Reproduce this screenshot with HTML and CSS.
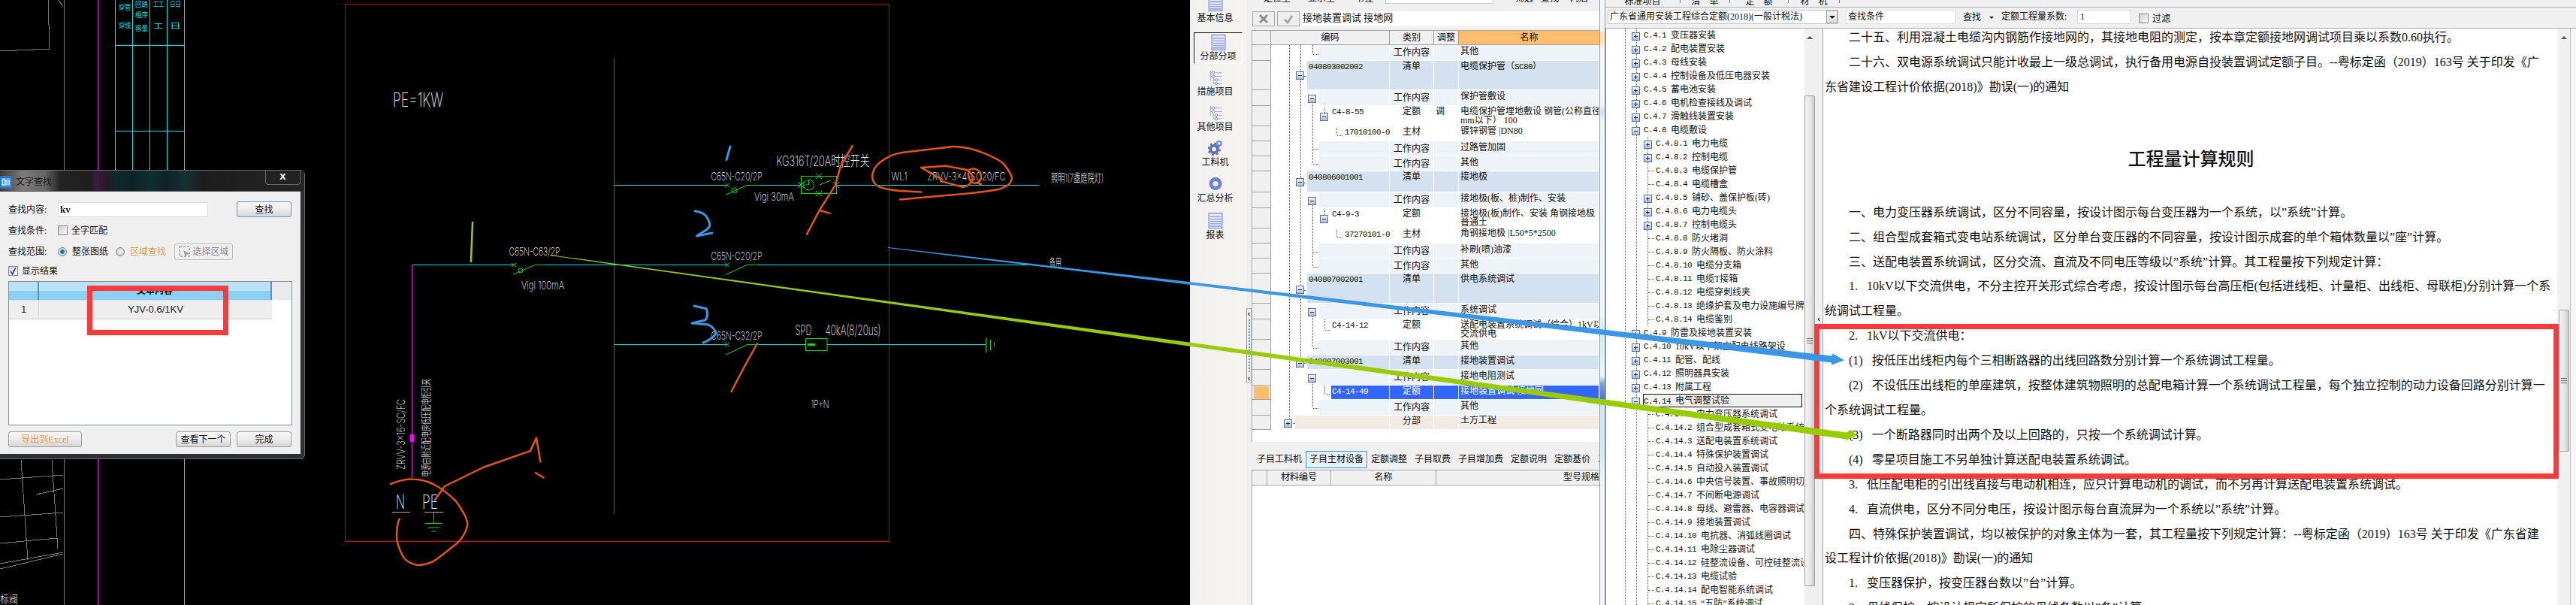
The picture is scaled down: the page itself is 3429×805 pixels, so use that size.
FILE: index.html
```html
<!DOCTYPE html>
<html lang="zh-CN">
<head>
<meta charset="utf-8">
<title>文字查找</title>
<link rel="stylesheet" href="styles.css">
</head>
<body>
<svg class="defs" aria-hidden="true">
  <defs>
    <linearGradient id="bxg" x1="0" y1="0" x2="0" y2="1"><stop offset="0" stop-color="#f4f7fd"/><stop offset="1" stop-color="#a9bbdd"/></linearGradient>
    <symbol id="minus" viewBox="0 0 11 11"><rect x=".5" y=".5" width="10" height="10" fill="url(#bxg)" stroke="#5d6f93"/><path d="M3 5.5h5" stroke="#1d2a55"/></symbol>
    <symbol id="plus" viewBox="0 0 11 11"><rect x=".5" y=".5" width="10" height="10" fill="url(#bxg)" stroke="#5d6f93"/><path d="M3 5.5h5M5.5 3v5" stroke="#1d2a55"/></symbol>
    <symbol id="listic" viewBox="0 0 18 20"><rect x=".5" y=".5" width="17" height="19" fill="#dfe6fa" stroke="#7280c8"/><path d="M2 5h14M2 8h14M2 11h14M2 14h14M2 17h14" stroke="#7f8fd0"/></symbol>
    <symbol id="treeic" viewBox="0 0 20 22"><path d="M3 2v14M3 5h16M3 10h16M7 10v10M7 15h12M7 20h12" fill="none" stroke="#9aa6c8"/><circle cx="7" cy="5" r="1.8" fill="#fff" stroke="#7d8cc0"/><circle cx="7" cy="10" r="1.8" fill="#fff" stroke="#7d8cc0"/><circle cx="11" cy="15" r="1.8" fill="#fff" stroke="#7d8cc0"/><circle cx="11" cy="20" r="1.8" fill="#fff" stroke="#7d8cc0"/></symbol>
  </defs>
</svg>

<div class="screen">
  <svg class="cad" width="1584" height="805" viewBox="0 0 1584 805">
    <g class="crisp" fill="none">
      <path class="gy" d="M85 0V226M85 611V805"/>
      <path class="gy" d="M0 68L66 65L64 0M77 0L84 8M28 612L37 745M69 612L77 730M0 638L84 632M48 658L84 650M0 688L84 682M0 723L76 716M0 757L84 737M0 750L84 735"/>
      <path class="mg" d="M130.500 0V805"/>
      <path class="cy" d="M153.500 0V226M176.500 0V226M199.500 0V226M222.500 0V226M245.500 0V805M153 60.500H246M153 174.500H246"/>
      <path class="rd" d="M459.500 5.500H1183.500V720.500H459.500Z"/>
      <path class="mg" d="M548.500 352V636M817.500 77V684"/>
      <path class="cy" d="M549 352.500H684M725 352.500H820M818 246.500H968M1009 246.500H1066M1113 246.500H1383M820 352.500H968M1009 352.500H1371M818 458.500H968M1009 458.500H1072M1101 458.500H1313"/>
    </g>
    <g class="gn" fill="none">
      <path d="M681 350l6 5M681 355l6-5M683 365L712 352.500H725"/><circle cx="693" cy="360" r="3"/>
      <path d="M965 243.500l6 6M965 249.500l6-6M966 259L994 246.500H1009"/><circle cx="977.500" cy="253.500" r="3.500"/>
      <path d="M965 349.500l6 6M965 355.500l6-6M966 365.500L994 352.500H1009"/>
      <path d="M965 455.500l6 6M965 461.500l6-6M966 472L995 458.500H1009"/>
      <rect x="1066.500" y="234.500" width="47" height="23"/><circle cx="1076.500" cy="246" r="7"/>
      <path d="M1076.500 240v6h-6M1062 242l8 8M1062 250l8-8M1086 231l8 7M1086 238l8-7M1086 254l8 7M1086 261l8-7M1109 242l8 8M1109 250l8-8M1091 246L1106 240"/>
      <rect x="1072.500" y="450.500" width="28.500" height="16"/>
      <path d="M1075 458.500h10" stroke-width="3"/>
      <path d="M1312.500 449.500V469M1318.500 452V466M1323.500 455V461"/>
      <path d="M577.500 681V696.500M566 696.500H588M570 702H585M574.500 707H580.500"/>
    </g>
    <path class="tan" d="M522 681.500H546M565 681.500H590"/>
    <rect x="546" y="578" width="5" height="10" fill="#f0f"/>

    <g class="cadt">
      <text x="523" y="142" font-size="25" textLength="67" lengthAdjust="spacingAndGlyphs">PE=1KW</text>
      <text x="677.500" y="340" font-size="15" textLength="68" lengthAdjust="spacingAndGlyphs">C65N-C63/2P</text>
      <text x="694" y="385" font-size="15" textLength="57" lengthAdjust="spacingAndGlyphs">Vigi 100mA</text>
      <text x="539" y="625" font-size="15" textLength="94" lengthAdjust="spacingAndGlyphs" transform="rotate(-90 539 625)">ZRVV-3x16-SC/FC</text>
      <text x="572" y="635" font-size="14" textLength="131" lengthAdjust="spacingAndGlyphs" transform="rotate(-90 572 635)">电源由附近配电房低压配电柜引来</text>
      <text x="527" y="677" font-size="25" textLength="12" lengthAdjust="spacingAndGlyphs">N</text>
      <text x="562" y="677" font-size="25" textLength="21" lengthAdjust="spacingAndGlyphs">PE</text>
      <text x="946.500" y="240" font-size="15" textLength="68" lengthAdjust="spacingAndGlyphs">C65N-C20/2P</text>
      <text x="1004" y="267" font-size="15" textLength="53" lengthAdjust="spacingAndGlyphs">Vigi 30mA</text>
      <text x="1033.500" y="221" font-size="19" textLength="124" lengthAdjust="spacingAndGlyphs">KG316T/20A时控开关</text>
      <text x="1186.500" y="240" font-size="15" textLength="21" lengthAdjust="spacingAndGlyphs">WL1</text>
      <text x="1234.500" y="240" font-size="15" textLength="104" lengthAdjust="spacingAndGlyphs">ZRVV-3x4-SC20/FC</text>
      <text x="1399" y="242" font-size="15" textLength="70" lengthAdjust="spacingAndGlyphs">照明1(7盏庭院灯)</text>
      <text x="1397" y="354" font-size="14" textLength="16" lengthAdjust="spacingAndGlyphs">备用</text>
      <text x="946.500" y="345.500" font-size="15" textLength="68" lengthAdjust="spacingAndGlyphs">C65N-C20/2P</text>
      <text x="946.500" y="451.500" font-size="15" textLength="68" lengthAdjust="spacingAndGlyphs">C65N-C32/2P</text>
      <text x="1058.500" y="445.500" font-size="19" textLength="22" lengthAdjust="spacingAndGlyphs">SPD</text>
      <text x="1098.500" y="445.500" font-size="19" textLength="74" lengthAdjust="spacingAndGlyphs">40kA(8/20us)</text>
      <text x="1079.500" y="543" font-size="15" textLength="24" lengthAdjust="spacingAndGlyphs">1P+N</text>
      <text x="0" y="802" font-size="14" textLength="24" lengthAdjust="spacingAndGlyphs">标阀</text>
    </g>
    <g class="cadc">
      <text x="158" y="13" font-size="9" textLength="16" lengthAdjust="spacingAndGlyphs">穿管</text>
      <text x="158" y="37" font-size="9" textLength="16" lengthAdjust="spacingAndGlyphs">穿线</text>
      <text x="180" y="9" font-size="9" textLength="17" lengthAdjust="spacingAndGlyphs">回路</text>
      <text x="180" y="23" font-size="9" textLength="17" lengthAdjust="spacingAndGlyphs">相序</text>
      <text x="180" y="41" font-size="9" textLength="17" lengthAdjust="spacingAndGlyphs">容量</text>
      <text x="204" y="9" font-size="9" textLength="14" lengthAdjust="spacingAndGlyphs">工工</text>
      <text x="204" y="38" font-size="9" textLength="13" lengthAdjust="spacingAndGlyphs">工</text>
      <text x="226" y="9" font-size="9" textLength="15" lengthAdjust="spacingAndGlyphs">日日</text>
      <text x="226" y="38" font-size="9" textLength="15" lengthAdjust="spacingAndGlyphs">日</text>
    </g>

    <g class="ink-or" fill="none">
      <path d="M1134.700 194L1119 220.700L1112 246.400L1090.800 279.800L1074 311.600M1090.800 279.800L1104.600 283.900"/>
      <path d="M1226 255.600L1198 254C1180 252 1167 250 1163 242C1158 232 1164 222 1172 215.600C1184 207 1192 204 1203 202.800L1269 195C1285 195 1298 199 1310 203.800C1325 210 1332 214 1336 218C1342 226 1347 232 1347 237.700C1345 246 1338 249 1331 251.500C1310 256 1285 258 1259 260L1198 265.400"/>
      <path d="M1254 238.700L1226 223L1259 220.700L1287 226C1293 230 1295 234 1295 238.700C1292 245 1288 248 1282 249L1269 245.400L1252 241"/>
      <path d="M1290 226C1298 222 1306 227 1306 235C1306 242 1300 245 1295 243C1289 240 1288 232 1290 226M1299 243L1306 245"/>
      <path d="M1008 457L991 487.700L973.500 521"/>
      <path d="M520 644C530 640 540 637 548.500 637.600C560 638 568 640 576.500 644C590 651 600 660 607 667C615 678 622 690 622.400 698C620 710 614 718 607 724C595 733 586 741 576.500 747C568 751 562 752 556 752C545 750 539 746 535.700 739C531 730 528 722 528 713.600C528 705 529 696 531.600 690.500"/>
      <path d="M579 665L592 647L643 622L704 600.600M705.600 600.600L714 582.600L719.400 614.500M712.800 629L723.500 635.500"/>
    </g>
    <g class="ink-bl" fill="none">
      <path d="M972 195L967 212.500"/>
      <path d="M925 280.800C934 282 940 286 942 291C946 298 946 302 940 306C934 310 930 312 927.600 314L948 310"/>
      <path d="M924 407L940.300 410.700C942 416 942 422 938.800 426L921 430L943 432C950 436 953 440 953 444C948 450 942 454 936 456"/>
    </g>
    <path class="ink-gr" fill="none" d="M629 296L627 348"/>
  </svg>

  <aside class="side">
    <div class="si"><svg class="ic"><use href="#listic"/></svg><span>基本信息</span></div>
    <div class="si on"><svg class="ic"><use href="#listic"/></svg><span>分部分项</span></div>
    <div class="si"><svg class="ic"><use href="#treeic"/></svg><span>措施项目</span></div>
    <div class="si"><svg class="ic"><use href="#treeic"/></svg><span>其他项目</span></div>
    <div class="si"><svg class="ic" viewBox="0 0 20 22"><circle cx="8" cy="13" r="5" fill="none" stroke="#5a6fc0" stroke-width="4"/><circle cx="8" cy="13" r="8" fill="none" stroke="#5a6fc0" stroke-width="2.500" stroke-dasharray="3 3.300"/><circle cx="15" cy="5" r="3" fill="none" stroke="#7f90d8" stroke-width="2.500"/></svg><span>工料机</span></div>
    <div class="si"><svg class="ic" viewBox="0 0 20 20"><circle cx="10" cy="10" r="6" fill="#eee" stroke="#6a7fe0" stroke-width="5"/></svg><span>汇总分析</span></div>
    <div class="si"><svg class="ic"><use href="#listic"/></svg><span>报表</span></div>
  </aside>

  <div class="split"><div class="grip"><b>‹</b><i></i><b>‹</b></div></div>

  <main class="mid">
    <div class="topclip">
      <div class="topbar">
        <span class="tb1">定位至</span><span class="tb2">显示至</span><span class="tb3">书签</span>
        <span class="tbi"></span><span class="tb4">筛选</span><span class="tb5">查找</span><span class="tb6">闪后</span>
      </div>
    </div>
    <div class="editbar">
      <span class="ebtn"><svg width="14" height="14" viewBox="0 0 14 14"><path d="M2 2l10 10M12 2L2 12" stroke="#8c8c8c" stroke-width="3"/></svg></span>
      <span class="ebtn"><svg width="14" height="14" viewBox="0 0 14 14"><path d="M2 8l4 4 6-9" fill="none" stroke="#a8a8a8" stroke-width="3"/></svg></span>
      <span class="einput">接地装置调试 接地网</span>
    </div>

    <section class="grid">
      <div class="gh">
        <i class="rn"></i><div class="code">编码</div><div class="type">类别</div><div class="adj">调整</div><div class="name">名称</div>
      </div>
      <div class="gbody">
        <div class="r wk h21"><i class="rn"></i><div class="code"><div class="fill"></div></div><div class="type">工作内容</div><div class="adj"></div><div class="name">其他</div></div>
        <div class="r list h39"><i class="rn"></i><div class="code"><div class="fill"><span class="mono">040803002002</span></div></div><div class="type">清单</div><div class="adj"></div><div class="name">电缆保护管（<span class="mono">SC80</span>）</div></div>
        <div class="r wk h21"><i class="rn"></i><div class="code"><div class="fill"></div></div><div class="type">工作内容</div><div class="adj"></div><div class="name">保护管敷设</div></div>
        <div class="r quota h27"><i class="rn"></i><div class="code"><div class="fill"><span class="mono">C4-8-55</span></div></div><div class="type">定额</div><div class="adj">调</div><div class="name">电缆保护管埋地敷设 钢管(公称直径100<br>mm以下） 100</div></div>
        <div class="r mat h20"><i class="rn"></i><div class="code"><div class="fill"><span class="mono">17010100-0</span></div></div><div class="type">主材</div><div class="adj"></div><div class="name">镀锌钢管 |DN80</div></div>
        <div class="r wk h20"><i class="rn"></i><div class="code"><div class="fill"></div></div><div class="type">工作内容</div><div class="adj"></div><div class="name">过路管加固</div></div>
        <div class="r wk h20"><i class="rn"></i><div class="code"><div class="fill"></div></div><div class="type">工作内容</div><div class="adj"></div><div class="name">其他</div></div>
        <div class="r list h28"><i class="rn"></i><div class="code"><div class="fill"><span class="mono">040806001001</span></div></div><div class="type">清单</div><div class="adj"></div><div class="name">接地极</div></div>
        <div class="r wk h21"><i class="rn"></i><div class="code"><div class="fill"></div></div><div class="type">工作内容</div><div class="adj"></div><div class="name">接地极(板、桩)制作、安装</div></div>
        <div class="r quota h27"><i class="rn"></i><div class="code"><div class="fill"><span class="mono">C4-9-3</span></div></div><div class="type">定额</div><div class="adj"></div><div class="name">接地极(板)制作、安装 角钢接地极<br>普通土</div></div>
        <div class="r mat h20"><i class="rn"></i><div class="code"><div class="fill"><span class="mono">37270101-0</span></div></div><div class="type">主材</div><div class="adj"></div><div class="name">角钢接地极 |L50*5*2500</div></div>
        <div class="r wk h20"><i class="rn"></i><div class="code"><div class="fill"></div></div><div class="type">工作内容</div><div class="adj"></div><div class="name">补刷(喷)油漆</div></div>
        <div class="r wk h20"><i class="rn"></i><div class="code"><div class="fill"></div></div><div class="type">工作内容</div><div class="adj"></div><div class="name">其他</div></div>
        <div class="r list h40"><i class="rn"></i><div class="code"><div class="fill"><span class="mono">040807002001</span></div></div><div class="type">清单</div><div class="adj"></div><div class="name">供电系统调试</div></div>
        <div class="r wk h21"><i class="rn"></i><div class="code"><div class="fill"></div></div><div class="type">工作内容</div><div class="adj"></div><div class="name">系统调试</div></div>
        <div class="r quota h27"><i class="rn"></i><div class="code"><div class="fill"><span class="mono">C4-14-12</span></div></div><div class="type">定额</div><div class="adj"></div><div class="name">送配电装置系统调试（综合）1kV以下<br>交流供电</div></div>
        <div class="r wk h21"><i class="rn"></i><div class="code"><div class="fill"></div></div><div class="type">工作内容</div><div class="adj"></div><div class="name">其他</div></div>
        <div class="r list h19"><i class="rn"></i><div class="code"><div class="fill"><span class="mono">040807003001</span></div></div><div class="type">清单</div><div class="adj"></div><div class="name">接地装置调试</div></div>
        <div class="r wk h21"><i class="rn"></i><div class="code"><div class="fill"></div></div><div class="type">工作内容</div><div class="adj"></div><div class="name">接地电阻测试</div></div>
        <div class="r quota sel h19"><i class="rn"></i><div class="code"><div class="fill"><span class="mono">C4-14-49</span></div></div><div class="type">定额</div><div class="adj"></div><div class="name">接地装置调试 接地网</div></div>
        <div class="r wk h21"><i class="rn"></i><div class="code"><div class="fill"></div></div><div class="type">工作内容</div><div class="adj"></div><div class="name">其他</div></div>
        <div class="r fen h19"><i class="rn"></i><div class="code"><div class="fill"></div></div><div class="type">分部</div><div class="adj"></div><div class="name">土方工程</div></div>

        <svg class="twigs" width="158" height="512" viewBox="0 0 158 512">
          <path class="dots" d="M24.500 0V503M39.500 0V423M55.500 0V12H63M55.500 72V158H63M55.500 138H63M55.500 207V295H63M55.500 275H63M55.500 355V403H63M55.500 443V483H63M71.500 83V95M87.500 110V120H95M71.500 219V231M87.500 246V256H95M71.500 365V379H79M71.500 453V464H79M39.500 41H48M39.500 183H48M39.500 326H48M39.500 423H48M24.500 503H32"/>
          <use href="#minus" x="33" y="35" width="11" height="11"/>
          <use href="#minus" x="33" y="177" width="11" height="11"/>
          <use href="#minus" x="33" y="320" width="11" height="11"/>
          <use href="#minus" x="33" y="418" width="11" height="11"/>
          <use href="#minus" x="49" y="66" width="11" height="11"/>
          <use href="#minus" x="49" y="202" width="11" height="11"/>
          <use href="#minus" x="49" y="350" width="11" height="11"/>
          <use href="#minus" x="49" y="438" width="11" height="11"/>
          <use href="#minus" x="65" y="90" width="11" height="11"/>
          <use href="#minus" x="65" y="226" width="11" height="11"/>
          <use href="#plus" x="17" y="498" width="11" height="11"/>
        </svg>
      </div>
      <div class="gblank"></div>
    </section>

    <div class="ltabs">
      <span>子目工料机</span><span class="act">子目主材设备</span><span>定额调整</span><span>子目取费</span><span>子目增加费</span><span>定额说明</span><span>定额基价</span><span>工</span>
    </div>
    <section class="ltable">
      <div class="lh"><i class="c0"></i><div class="c1">材料编号</div><div class="c2">名称</div><div class="c3">型号规格</div></div>
    </section>
  </main>

  <div class="midbar"></div>

  <div class="right">
    <div class="rtabs">
      <span class="rt t1">标准项目</span><span class="rt t2">清　单</span><span class="rt t3">定　额</span><span class="rt t4">材　机</span>
    </div>
    <div class="rtool">
      <div class="combo"><span class="ctext">广东省通用安装工程综合定额(2018)(一般计税法)</span><span class="carr"><b></b></span></div>
      <div class="sinput">查找条件</div>
      <span class="sbtn">查找</span><span class="sdrop"></span>
      <span class="slab">定额工程量系数:</span>
      <div class="ninput">1</div>
      <span class="chk"></span><span class="flt">过滤</span>
    </div>
    <div class="panes">
      <nav class="tree">
        <div class="t l1"><svg class="bx"><use href="#plus"/></svg><em>C.4.1 </em>变压器安装</div>
        <div class="t l1"><svg class="bx"><use href="#plus"/></svg><em>C.4.2 </em>配电装置安装</div>
        <div class="t l1"><svg class="bx"><use href="#plus"/></svg><em>C.4.3 </em>母线安装</div>
        <div class="t l1"><svg class="bx"><use href="#plus"/></svg><em>C.4.4 </em>控制设备及低压电器安装</div>
        <div class="t l1"><svg class="bx"><use href="#plus"/></svg><em>C.4.5 </em>蓄电池安装</div>
        <div class="t l1"><svg class="bx"><use href="#plus"/></svg><em>C.4.6 </em>电机检查接线及调试</div>
        <div class="t l1"><svg class="bx"><use href="#plus"/></svg><em>C.4.7 </em>滑触线装置安装</div>
        <div class="t l1"><svg class="bx"><use href="#minus"/></svg><em>C.4.8 </em>电缆敷设</div>
        <div class="t l2"><svg class="bx"><use href="#plus"/></svg><em>C.4.8.1 </em>电力电缆</div>
        <div class="t l2"><svg class="bx"><use href="#plus"/></svg><em>C.4.8.2 </em>控制电缆</div>
        <div class="t l2"><u></u><em>C.4.8.3 </em>电缆保护管</div>
        <div class="t l2"><u></u><em>C.4.8.4 </em>电缆槽盒</div>
        <div class="t l2"><svg class="bx"><use href="#plus"/></svg><em>C.4.8.5 </em>铺砂、盖保护板(砖)</div>
        <div class="t l2"><svg class="bx"><use href="#plus"/></svg><em>C.4.8.6 </em>电力电缆头</div>
        <div class="t l2"><svg class="bx"><use href="#plus"/></svg><em>C.4.8.7 </em>控制电缆头</div>
        <div class="t l2"><u></u><em>C.4.8.8 </em>防火堵洞</div>
        <div class="t l2"><u></u><em>C.4.8.9 </em>防火隔板、防火涂料</div>
        <div class="t l2"><u></u><em>C.4.8.10 </em>电缆分支箱</div>
        <div class="t l2"><u></u><em>C.4.8.11 </em>电缆T接箱</div>
        <div class="t l2"><u></u><em>C.4.8.12 </em>电缆穿刺线夹</div>
        <div class="t l2"><u></u><em>C.4.8.13 </em>绝缘护套及电力设施编号牌</div>
        <div class="t l2"><u></u><em>C.4.8.14 </em>电缆鉴别</div>
        <div class="t l1"><svg class="bx"><use href="#plus"/></svg><em>C.4.9 </em>防雷及接地装置安装</div>
        <div class="t l1"><svg class="bx"><use href="#plus"/></svg><em>C.4.10 </em>10kV以下架空配电线路架设</div>
        <div class="t l1"><svg class="bx"><use href="#plus"/></svg><em>C.4.11 </em>配管、配线</div>
        <div class="t l1"><svg class="bx"><use href="#plus"/></svg><em>C.4.12 </em>照明器具安装</div>
        <div class="t l1"><svg class="bx"><use href="#plus"/></svg><em>C.4.13 </em>附属工程</div>
        <div class="t l1 cur"><svg class="bx"><use href="#minus"/></svg><span class="curbox"><em>C.4.14 </em>电气调整试验</span></div>
        <div class="t l2"><u></u><em>C.4.14.1 </em>电力变压器系统调试</div>
        <div class="t l2"><u></u><em>C.4.14.2 </em>组合型成套箱式变电站系统调试</div>
        <div class="t l2"><u></u><em>C.4.14.3 </em>送配电装置系统调试</div>
        <div class="t l2"><u></u><em>C.4.14.4 </em>特殊保护装置调试</div>
        <div class="t l2"><u></u><em>C.4.14.5 </em>自动投入装置调试</div>
        <div class="t l2"><u></u><em>C.4.14.6 </em>中央信号装置、事故照明切换</div>
        <div class="t l2"><u></u><em>C.4.14.7 </em>不间断电源调试</div>
        <div class="t l2"><u></u><em>C.4.14.8 </em>母线、避雷器、电容器调试</div>
        <div class="t l2"><u></u><em>C.4.14.9 </em>接地装置调试</div>
        <div class="t l2"><u></u><em>C.4.14.10 </em>电抗器、消弧线圈调试</div>
        <div class="t l2"><u></u><em>C.4.14.11 </em>电除尘器调试</div>
        <div class="t l2"><u></u><em>C.4.14.12 </em>硅整流设备、可控硅整流设备</div>
        <div class="t l2"><u></u><em>C.4.14.13 </em>电缆试验</div>
        <div class="t l2"><u></u><em>C.4.14.14 </em>配电智能系统调试</div>
        <div class="t l2"><u></u><em>C.4.14.15 </em>“五防”系统调试</div>
      </nav>
      <div class="vs vs-tree"><span class="up"></span><div class="thumb"><i></i></div></div>
      <div class="psplit"><b>‹</b></div>
      <article class="doc">
        <p>二十五、利用混凝土电缆沟内钢筋作接地网的，其接地电阻的测定，按本章定额接地网调试项目乘以系数0.60执行。</p>
        <p>二十六、双电源系统调试只能计收最上一级总调试，执行备用电源自投装置调试定额子目。--粤标定函（2019）163号 关于印发《广<br>东省建设工程计价依据(2018)》勘误(一)的通知</p>
        <h1>工程量计算规则</h1>
        <p>一、电力变压器系统调试，区分不同容量，按设计图示每台变压器为一个系统，以”系统”计算。</p>
        <p>二、组合型成套箱式变电站系统调试，区分单台变压器的不同容量，按设计图示成套的单个箱体数量以”座”计算。</p>
        <p>三、送配电装置系统调试，区分交流、直流及不同电压等级以”系统”计算。其工程量按下列规定计算：</p>
        <p>1.&nbsp;&nbsp;&nbsp;10kV以下交流供电，不分主控开关形式综合考虑，按设计图示每台高压柜(包括进线柜、计量柜、出线柜、母联柜)分别计算一个系<br>统调试工程量。</p>
        <p>2.&nbsp;&nbsp;&nbsp;1kV以下交流供电：</p>
        <p>(1)&nbsp;&nbsp;&nbsp;按低压出线柜内每个三相断路器的出线回路数分别计算一个系统调试工程量。</p>
        <p>(2)&nbsp;&nbsp;&nbsp;不设低压出线柜的单座建筑，按整体建筑物照明的总配电箱计算一个系统调试工程量，每个独立控制的动力设备回路分别计算一<br>个系统调试工程量。</p>
        <p>(3)&nbsp;&nbsp;&nbsp;一个断路器同时出两个及以上回路的，只按一个系统调试计算。</p>
        <p>(4)&nbsp;&nbsp;&nbsp;零星项目施工不另单独计算送配电装置系统调试。</p>
        <p>3.&nbsp;&nbsp;&nbsp;低压配电柜的引出线直接与电动机相连，应只计算电动机的调试，而不另再计算送配电装置系统调试。</p>
        <p>4.&nbsp;&nbsp;&nbsp;直流供电，区分不同分电压，按设计图示每台直流屏为一个系统以”系统”计算。</p>
        <p>四、特殊保护装置调试，均以被保护的对象主体为一套，其工程量按下列规定计算：--粤标定函（2019）163号 关于印发《广东省建<br>设工程计价依据(2018)》勘误(一)的通知</p>
        <p>1.&nbsp;&nbsp;&nbsp;变压器保护，按变压器台数以”台”计算。</p>
        <p>2.&nbsp;&nbsp;&nbsp;母线保护，按设计规定所保护的母线条数以”条”计算。</p>
      </article>
      <div class="vs vs-doc"><span class="up"></span><div class="thumb"><i></i></div></div>
      <div class="edge"></div>
    </div>
  </div>

  <div class="bigred"></div>

  <div class="dialog">
    <header class="dtitle">
      <svg class="dicon" width="16" height="17" viewBox="0 0 16 17"><rect width="16" height="17" rx="2" fill="#2a78c8"/><rect x="2" y="3" width="12" height="11" fill="#8ec2f0" opacity=".55"/><path d="M3 5h4v7H3zM9 5v7M12 5v7" fill="none" stroke="#fff"/></svg>
      <span class="dname">文字查找</span>
      <span class="dclose">x</span>
    </header>
    <div class="dbody">
      <div class="drow first">
        <label>查找内容:</label><span class="dinput">kv</span><span class="dbtn prim w73">查找</span>
      </div>
      <div class="drow">
        <label>查找条件:</label><span class="cb"></span><span class="opt">全字匹配</span>
      </div>
      <div class="drow">
        <label>查找范围:</label><span class="rb sel"></span><span class="opt o2">整张图纸</span><span class="rb second"></span><span class="opt warn">区域查找</span>
        <span class="dbtn pick"><svg width="16" height="16" viewBox="0 0 16 16"><rect x="1" y="1" width="13" height="13" fill="none" stroke="#b5b5b5" stroke-width="2" stroke-dasharray="3 2"/><path d="M6 6l8 5-4 1-1 3z" fill="#9a9a9a"/></svg><span>选择区域</span></span>
      </div>
      <div class="drow last">
        <span class="cb on"><svg width="12" height="12" viewBox="0 0 12 12"><path d="M2.500 6l2.500 4 4.500-9" fill="none" stroke="#3b4f9c" stroke-width="2"/></svg></span><span class="opt o3">显示结果</span>
      </div>
      <div class="dtable">
        <div class="dh"><i class="d0"></i><b class="d1">文本内容</b><i class="d2"></i></div>
        <div class="dr"><span class="d0">1</span><span class="d1">YJV-0.6/1KV</span></div>
      </div>
      <div class="dfoot">
        <span class="dbtn warn w98">导出到Excel</span>
        <span class="dbtn w73 push">查看下一个</span>
        <span class="dbtn w73">完成</span>
      </div>
    </div>
    <div class="smallred"></div>
  </div>

  <svg class="arrows" width="3429" height="805" viewBox="0 0 3429 805">
    <polygon fill="#3a97e5" points="1182,329 2438,473.500 2440,470.500 2455,479.300 2438,485.700 2438,482.500 1182,330"/>
    <polygon fill="#99cc00" points="732,339 2458,575.500 2463,572 2472,579 2455,587 2458,584.500 732,340"/>
  </svg>
</div>
</body>
</html>
```

FILE: styles.css
```css
* { box-sizing: border-box; }
html, body { margin: 0; padding: 0; }
body {
  width: 3429px;
  height: 805px;
  overflow: hidden;
  background: #000;
  color: #111;
  font: 12px/14px "Liberation Serif", "Noto Sans CJK SC", serif;
}
.defs { position: absolute; width: 0; height: 0; }
.screen { position: relative; display: flex; width: 3429px; height: 805px; overflow: hidden; }

/* CAD canvas */
.cad { flex: none; display: block; background: #000; }
.crisp { shape-rendering: crispEdges; }
.gy { stroke: #7c7c7c; stroke-width: 1; fill: none; }
.mg { stroke: #e000e0; stroke-width: 1; }
.cy { stroke: #00e6e6; stroke-width: 1; }
.rd { stroke: #e00000; stroke-width: 1; }
.gn { stroke: #00e000; stroke-width: 1; }
.tan { stroke: #c8a060; stroke-width: 1; fill: none; }
.cadt { fill: #f2f2f2; font-family: Inter, "Noto Sans CJK SC", sans-serif; font-weight: 200; }
.cadc { fill: #00e6e6; font-family: "Noto Sans CJK SC", sans-serif; }
.ink-or { stroke: #e4560f; stroke-width: 2.5; stroke-linecap: round; stroke-linejoin: round; }
.ink-bl { stroke: #3a97e5; stroke-width: 3; stroke-linecap: round; stroke-linejoin: round; }
.ink-gr { stroke: #a2c41c; stroke-width: 2.5; stroke-linecap: round; }

/* left navigation */
.side {
  flex: none; width: 75px; height: 805px; overflow: hidden;
  background: linear-gradient(90deg, #f1f1f0, #f6f4ef);
  display: flex; flex-direction: column;
}
.si {
  height: 47px; flex: none; overflow: hidden; padding-right: 8px;
  display: flex; flex-direction: column; align-items: center; justify-content: flex-end; gap: 2px;
}
.si span { line-height: 14px; }
.ic { width: 20px; height: 21px; flex: none; }
.si:nth-child(1) { height: 31px; }
.si:nth-child(2) {
  height: 42px; width: 65px; margin: 12px 0 0 5px; padding: 0 0 2px;
  border: 1px solid #fff; border-color: #222 #fff #fff #222; gap: 0;
}
.si:nth-child(2) .ic { margin-bottom: 1px; }
.si:nth-child(3) { height: 44px; }
.si:nth-child(6) { height: 48px; }
.si:nth-child(7) { height: 49px; }

.split { flex: none; width: 7px; height: 805px; background: #f0f0f0; position: relative; }
.grip {
  margin-top: 410px; height: 100px; background: #efeff0; border: 1px solid #bbb; border-left-color: #999;
  display: flex; flex-direction: column; align-items: center; justify-content: space-between;
}
.grip b { line-height: 12px; font: 700 11px/12px "Liberation Sans", sans-serif; color: #222; }
.grip i { flex: 1; width: 1px; border-left: 2px dotted #6d97d8; margin: 2px 0; }

/* middle estimate grid */
.mid { flex: none; width: 464px; height: 805px; background: #f0f0f0; display: flex; flex-direction: column; border-right: 1px solid #9c9c9c; overflow: hidden; }
.topclip { height: 15px; overflow: hidden; flex: none; }
.topbar { position: relative; display: flex; height: 14px; margin-top: -9px; }
.tb1 { margin-left: 16px; width: 59px; }
.tb2 { width: 63px; }
.tb3 { width: 40px; }
.tbi { width: 144px; height: 14px; background: #fff; border: 1px solid #ccc; margin-right: 29px; }
.tb4 { width: 34px; }
.tb5 { width: 39px; }
.editbar { flex: none; height: 20px; margin-left: 1px; display: flex; align-items: stretch; }
.ebtn { width: 30px; border: 1px solid #a9a9a9; background: #eee; margin-right: 3px; display: flex; align-items: center; justify-content: center; }
.einput { flex: 1; background: #fff; margin-left: -1px; font-size: 13px; line-height: 18px; padding-left: 2px; }

.grid { flex: none; margin-top: 5px; background: #fff; border-left: 1px solid #a5a5a5; border-top: 1px solid #a5a5a5; }
.gh { display: flex; height: 19px; background: #f0f0f0; border-bottom: 1px solid #a5a5a5; text-align: center; line-height: 18px; }
.rn { display: block; flex: none; width: 25px; background: #f0f0f0; border-right: 1px solid #a5a5a5; border-bottom: 1px solid #a5a5a5; }
.gh .rn { border-bottom: 0; }
.code { flex: none; width: 158px; position: relative; }
.type { flex: none; width: 59px; text-align: center; }
.adj { flex: none; width: 33px; padding-left: 2px; }
.name { flex: 1; min-width: 0; white-space: nowrap; overflow: hidden; padding-left: 2px; line-height: 12px; }
.gh .code, .gh .type, .gh .adj { border-right: 1px solid #9a9a9a; }
.gh .adj { padding: 0; text-align: center; }
.gh .name { background: #ffbe6b; padding: 0; text-align: center; line-height: 18px; }

.gbody { position: relative; }
.r { display: flex; overflow: hidden; background: #fff; }
.h19 { height: 19px; } .h20 { height: 20px; } .h21 { height: 21px; } .h27 { height: 27px; }
.h28 { height: 28px; } .h39 { height: 39px; } .h40 { height: 40px; }
.r .code, .r .type, .r .adj, .r .name { border-right: 1px solid #fff; border-bottom: 1px solid #fff; }
.r .code { display: flex; }
.fill { flex: 1; min-width: 0; white-space: nowrap; line-height: 14px; }
.mono { font: 11px/14px "Liberation Mono", monospace; letter-spacing: -.6px; }
.wk .fill { margin-left: 63px; }
.list .fill { margin-left: 48px; padding-left: 2px; }
.quota .fill { margin-left: 80px; padding-left: 1px; }
.mat .fill { margin-left: 98px; }
.fen .fill { margin-left: 32px; }
.wk .fill, .wk .type, .wk .adj, .wk .name { background: #eef3f7; }
.list .fill, .list .type, .list .adj, .list .name { background: #d3e1f1; }
.fen .fill, .fen .type, .fen .adj, .fen .name { background: #f2ebe4; }
.sel .fill, .sel .type, .sel .adj, .sel .name { background: #3366ff; color: #fff; }
.sel .rn { background: linear-gradient(#ffbe6b, #ffbe6b) content-box, #f0f0f0; padding: 1px 2px 0; }
.r .type { padding-top: 1px; line-height: 13px; }
.wk .type { padding-top: 4px; }
.wk .name { padding-top: 2px; }
.list .type, .list .name, .quota .type, .quota .name { padding-top: 1px; }
.twigs { position: absolute; left: 25px; top: 0; }
.dots { fill: none; stroke: #555; stroke-width: 1; stroke-dasharray: 1 1; shape-rendering: crispEdges; }
.gblank { height: 16px; background: #fff; }

.ltabs { flex: none; margin: 12px 0 0 2px; height: 23px; display: flex; align-items: center; overflow: hidden; }
.ltabs span { padding: 0 5px; line-height: 21px; height: 23px; flex: none; border: 1px solid transparent; border-width: 1px 0; }
.ltabs .act { background: #e5f1fb; border: 1px solid #3399ff; padding: 0 4px; }
.ltable { flex: 1; margin-top: 2px; background: #fff; border-left: 1px solid #a5a5a5; border-top: 1px solid #a5a5a5; }
.lh { display: flex; height: 20px; background: #f0f0f0; border-bottom: 1px solid #a5a5a5; line-height: 19px; overflow: hidden; }
.c0 { width: 20px; border-right: 1px solid #a5a5a5; flex: none; }
.c1 { width: 85px; flex: none; text-align: center; border-right: 1px solid #a5a5a5; }
.c2 { width: 140px; flex: none; text-align: center; border-right: 1px solid #a5a5a5; }
.c3 { flex: 1; text-align: right; white-space: nowrap; }

.midbar {
  flex: none; width: 7px; height: 805px;
  background: linear-gradient(180deg, #eef6f6 0, #eef6f6 40px, #fbe3c5 44px, #fbe3c5 58px, #f3f6f8 64px, #f3f6f8 140px, #d7e2f8 146px, #d7e2f8 152px, #ecf6f8 160px, #ecf6f8 420px, #c4f0f4 440px, #eaf8fa 500px, #7aa4ee 510px, #3f74ea 530px, #cfe6f6 540px, #c8eef4 600px, #f0f4f6 640px);
  border-right: 1px solid #999;
}

/* quota library */
.right { flex: 1; min-width: 0; height: 805px; background: #f0f0f0; display: flex; flex-direction: column; }
.rtabs { flex: none; height: 10px; display: flex; overflow: hidden; border-bottom: 1px solid #a4b2c0; }
.rt { line-height: 14px; height: 9px; margin-top: -5px; padding-top: 0; text-align: center; border-right: 1px solid #8a8a8a; flex: none; box-sizing: content-box; }
.t1 { width: 99px; }
.t2 { width: 65px; }
.t3 { width: 77px; }
.t4 { width: 67px; }
.rtool { flex: none; height: 27px; padding: 3px 0 0 3px; display: flex; align-items: flex-start; white-space: nowrap; }
.combo { width: 307px; height: 19px; background: #fff; border: 1px solid #c8c8c8; display: flex; line-height: 17px; font-size: 12px; padding-left: 2px; }
.ctext { flex: 1; overflow: hidden; }
.carr { width: 15px; background: linear-gradient(#f4f4f4, #dedede); border: 1px solid #a0a0a0; display: flex; align-items: center; justify-content: center; }
.carr b, .sdrop { display: block; border: 4px solid transparent; border-top-color: #111; border-bottom-width: 0; }
.sinput { margin-left: 10px; width: 146px; height: 19px; background: #fff; border: 1px solid #e2e2e2; line-height: 17px; padding-left: 2px; }
.sbtn { margin-left: 10px; line-height: 21px; height: 21px; }
.sdrop { margin: 9px 0 0 11px; border-width: 3px 3px 0; }
.slab { margin-left: 10px; line-height: 19px; width: 101px; }
.ninput { width: 71px; height: 19px; background: #fff; border: 1px solid #dcdcdc; line-height: 17px; padding-left: 3px; }
.chk { margin: 5px 0 0 11px; width: 13px; height: 13px; border: 1px solid #8f8f8f; background: linear-gradient(135deg, #cfcfcf, #f6f6f6); }
.flt { margin-left: 5px; line-height: 24px; }

.panes { flex: 1; min-height: 0; display: flex; border-top: 1px solid #a8a8a8; }
.tree {
  flex: none; width: 265px; height: 767px; overflow: hidden; background:
    repeating-linear-gradient(#666 0 1px, transparent 1px 2px) 25px 0/1px 100% no-repeat,
    repeating-linear-gradient(#666 0 1px, transparent 1px 2px) 40px 0/1px 100% no-repeat,
    #fff;
  border-left: 1px solid #8e8e8e;
}
.t { height: 18px; display: flex; align-items: center; white-space: nowrap; line-height: 18px; overflow: hidden; width: 263px; }
.t em { font: 11px/18px "Liberation Mono", monospace; letter-spacing: -.6px; white-space: pre; flex: none; }
.bx { width: 11px; height: 11px; flex: none; margin-top: 3px; }
.l1 { padding-left: 34px; }
.l1 .bx { margin-right: 5px; }
.l2 {
  padding-left: 50px;
  background: repeating-linear-gradient(#666 0 1px, transparent 1px 2px) 55px 0/1px 100% no-repeat;
}
.l2 .bx { margin-right: 5px; }
.l2 u { display: block; width: 8px; margin: 0 2px 0 6px; border-top: 1px dotted #555; flex: none; }
.cur .curbox { display: block; flex: none; width: 212px; height: 18px; margin-left: -1px; background: #f0f0f0; border: 1px solid #111; line-height: 16px; }
.cur .curbox em { line-height: 16px; }

.vs { flex: none; display: flex; flex-direction: column; align-items: center; background: #f0f0f0; }
.up { display: block; flex: none; margin-top: 10px; border: 4px solid transparent; border-bottom-color: #555; border-top-width: 0; }
.vs-tree { width: 14px; }
.vs-tree .thumb { margin-top: 75px; height: 653px; }
.vs-doc { width: 17px; }
.vs-doc .thumb { margin-top: 360px; height: 189px; }
.thumb { width: 14px; flex: none; background: linear-gradient(90deg, #f3f3f3, #e4e4e4 60%, #c9c9c9); border: 1px solid #a2a2a2; border-radius: 2px; display: flex; align-items: center; justify-content: center; }
.thumb i { display: block; width: 8px; height: 8px; background: repeating-linear-gradient(#666 0 1px, transparent 1px 3px); }
.psplit { flex: none; width: 10px; background: #f0f0f0; display: flex; flex-direction: column; align-items: center; padding-top: 380px; }
.psplit b { font: 700 11px/12px "Liberation Sans", sans-serif; }
.doc { flex: 1; min-width: 0; height: 767px; overflow: hidden; background: #fff; border-left: 1px solid #a8a8a8; padding: 0 0 0 2px; font-size: 16px; line-height: 32.9px; white-space: nowrap; }
.doc p { margin: 0; text-indent: 32px; }
.doc p:first-child { margin-top: -4px; }
.doc h1 { margin: 57px 0 37px; font-size: 24px; line-height: 40px; text-align: center; font-weight: 500; font-family: "Noto Sans CJK SC", sans-serif; }
.edge { flex: none; width: 8px; background: #f6f6f6; border-left: 1px solid #c4c4c4; }

.bigred { position: absolute; left: 2415px; top: 431px; width: 991px; height: 206px; border: 7px solid #ff3939; }

/* find dialog */
.dialog { position: absolute; left: 0; top: 226px; width: 406px; height: 385px; background: #2d2f30; border: 1px solid #6b6b6b; border-left: 0; border-radius: 0 6px 6px 0; padding: 0 5px 6px 0; display: flex; flex-direction: column; }
.dtitle {
  flex: none; height: 27px; display: flex; align-items: flex-start; margin-right: -5px; overflow: hidden;
  background: linear-gradient(90deg, #3a3a3a 0, #7c7c7c 30px, #666 60px, #242424 80px, #1e1e1e 120px, #3d1a3f 130px, #221c24 142px, #10282c 155px, #0c2226 176px, #102e32 199px, #0f2226 222px, #143236 245px, #1d1d1d 270px, #242424 406px);
}
.dicon { margin-top: 7px; flex: none; }
.dname { margin: 7px 0 0 5px; color: #1a1a1a; line-height: 14px; font-family: "Noto Sans CJK SC", sans-serif; }
.dclose { margin: 0 5px 0 auto; width: 47px; height: 19px; border: 1px solid #666; border-top: 0; border-radius: 0 0 4px 4px; background: #222; color: #fff; text-align: center; font: 700 15px/13px "Liberation Sans", sans-serif; }
.dbody { flex: 1; min-height: 0; background: #efefef; padding: 13px 12px 0 11px; border-top: 1px solid #555; }
.drow { display: flex; align-items: center; height: 21px; margin-top: 7px; }
.drow.first { margin-top: 0; justify-content: flex-start; }
.drow.last { margin-top: 5px; }
.drow label { width: 66px; flex: none; }
.dinput { width: 200px; height: 20px; background: #fff; border: 1px solid #dadada; border-radius: 2px; line-height: 18px; padding-left: 2px; font-weight: 700; font-size: 13px; margin-right: 38px; }
.dbtn { display: flex; align-items: center; justify-content: center; height: 21px; border: 1px solid #9c9c9c; border-radius: 3px; background: linear-gradient(#f6f6f6, #ececec 50%, #d6d6d6); flex: none; white-space: nowrap; }
.w73 { width: 73px; }
.w98 { width: 98px; }
.dbtn.prim { border-color: #3aa7dd; }
.cb { width: 13px; height: 13px; border: 1px solid #8c8c8c; background: linear-gradient(135deg, #cfcfcf, #f8f8f8); flex: none; display: flex; align-items: center; justify-content: center; }
.opt { margin-left: 5px; }
.opt.o2 { margin-left: 7px; }
.opt.o3 { margin-left: 5px; }
.warn { color: #d9a24a; }
.rb { width: 12px; height: 12px; border-radius: 50%; background: radial-gradient(#f5f5f5, #bcbcbc); border: 1px solid #8c8c8c; flex: none; }
.rb.sel { background: radial-gradient(#0a6fb0 0 30%, #cfe1ee 50%, #9cb2c4); }
.rb.second { margin-left: 10px; }
.opt.warn { margin-left: 7px; }
.pick { margin-left: 11px; width: 78px; height: 22px; color: #8e8e8e; gap: 3px; background: #f0f0f0; border-color: #bcbcbc; }
.dtable { margin-top: 3px; height: 192px; width: 378px; background: #fff; border: 1px solid #8a8f94; }
.dh { display: flex; height: 24px; background: linear-gradient(90deg, transparent 350px, #eaeaea 350px), linear-gradient(#b9e2f8 0 50%, #8cd0f3 50%); }
.dh .d0 { display: block; width: 40px; border-right: 2px solid #5d93b3; flex: none; }
.dh .d1 { width: 310px; flex: none; text-align: center; line-height: 22px; border-right: 2px solid #5d93b3; font-family: "Noto Sans CJK SC", sans-serif; }
.dr { display: flex; width: 350px; height: 26px; background: #eee; border-top: 1px solid #dcdcdc; border-bottom: 1px solid #d0d0d0; line-height: 24px; font: 13px/24px "Liberation Sans", sans-serif; color: #222; }
.dr .d0 { width: 40px; text-align: center; border-right: 1px solid #d4d4d4; flex: none; }
.dr .d1 { flex: 1; text-align: center; }
.dfoot { display: flex; margin-top: 8px; gap: 8px; }
.dfoot .push { margin-left: auto; }
.smallred { position: absolute; left: 116px; top: 153px; width: 188px; height: 66px; border: 7px solid #ff3939; }

.arrows { position: absolute; left: 0; top: 0; pointer-events: none; }
```
